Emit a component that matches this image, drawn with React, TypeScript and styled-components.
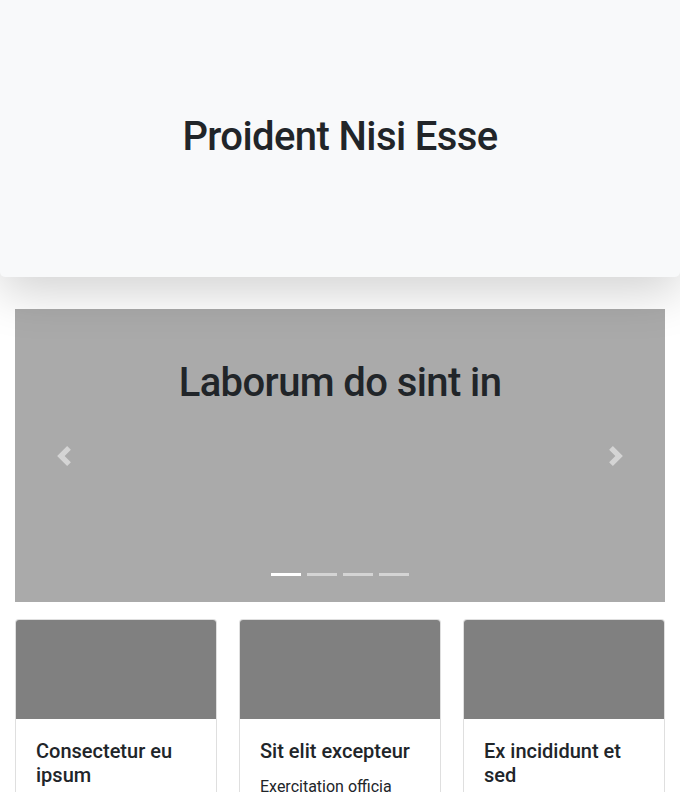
import React from "react";
import styled, { createGlobalStyle } from "styled-components";

const GlobalStyle = createGlobalStyle`
  *, *::before, *::after { box-sizing: border-box; }
  body {
    margin: 0;
    background: #fff;
    font-family: Roboto, "Noto Sans", "Liberation Sans", sans-serif;
    color: #212529;
  }
`;

const Hero = styled.header`
  background: #f8f9fa;
  border-radius: 0 0 5px 5px;
  box-shadow: 0 16px 48px rgba(0, 0, 0, 0.175);
  padding: 113px 16px 116px;
  text-align: center;
  position: relative;
  z-index: 1;
`;

const HeroTitle = styled.h1`
  margin: 0;
  font-size: 40px;
  line-height: 48px;
  font-weight: 500;
  letter-spacing: -0.6px;
  color: #212529;
`;

const Main = styled.main`
  padding: 32px 15px 0;
`;

const Carousel = styled.section`
  position: relative;
  height: 293px;
  background: #aaa;
  padding-top: 50px;
  text-align: center;
`;

const SlideTitle = styled.h2`
  margin: 0;
  font-size: 40px;
  line-height: 48px;
  font-weight: 500;
  letter-spacing: -0.6px;
  color: #212529;
`;

const Control = styled.button<{ $side: "left" | "right" }>`
  position: absolute;
  top: 0;
  bottom: 0;
  ${(p) => (p.$side === "left" ? "left: 0;" : "right: 0;")}
  width: 15%;
  display: flex;
  align-items: center;
  justify-content: center;
  background: none;
  border: 0;
  padding: 0;
  opacity: 0.5;
  cursor: pointer;
`;

const Indicators = styled.ol`
  position: absolute;
  left: 15%;
  right: 15%;
  bottom: 0;
  margin: 0 0 16px;
  padding: 0;
  list-style: none;
  display: flex;
  justify-content: center;
`;

const Indicator = styled.li<{ $active?: boolean }>`
  box-sizing: content-box;
  width: 30px;
  height: 3px;
  margin: 0 3px;
  background: #fff;
  background-clip: padding-box;
  border-top: 10px solid transparent;
  border-bottom: 10px solid transparent;
  opacity: ${(p) => (p.$active ? 1 : 0.5)};
`;

const CardGrid = styled.div`
  display: grid;
  grid-template-columns: repeat(3, 1fr);
  gap: 22px;
  margin-top: 17px;
`;

const Card = styled.article`
  background: #fff;
  border: 1px solid rgba(0, 0, 0, 0.125);
  border-radius: 4px;
  overflow: hidden;
`;

const CardImage = styled.div`
  height: 99px;
  background: #808080;
`;

const CardBody = styled.div`
  padding: 20px;
`;

const CardTitle = styled.h5`
  margin: 0 0 12px;
  font-size: 20px;
  line-height: 24px;
  font-weight: 500;
  color: #212529;
`;

const CardText = styled.p`
  margin: 0;
  font-size: 16px;
  line-height: 24px;
  color: #212529;
`;

const Chevron = ({ dir }: { dir: "prev" | "next" }) => (
  <svg width="20" height="20" viewBox="0 0 8 8" fill="#fff" aria-hidden="true">
    {dir === "prev" ? (
      <path d="M5.25 0l-4 4 4 4 1.5-1.5L4.25 4l2.5-2.5L5.25 0z" />
    ) : (
      <path d="M2.75 0l-1.5 1.5L3.75 4l-2.5 2.5L2.75 8l4-4-4-4z" />
    )}
  </svg>
);

const cards = [
  { title: "Consectetur eu ipsum", text: "Aliqua labore tempor dolore magna." },
  { title: "Sit elit excepteur", text: "Exercitation officia nulla veniam." },
  { title: "Ex incididunt et sed", text: "Duis aute irure dolor in velit." },
];

export default function App() {
  return (
    <>
      <GlobalStyle />
      <Hero>
        <HeroTitle>Proident Nisi Esse</HeroTitle>
      </Hero>
      <Main>
        <Carousel>
          <SlideTitle>Laborum do sint in</SlideTitle>
          <Control $side="left" aria-label="Previous">
            <Chevron dir="prev" />
          </Control>
          <Control $side="right" aria-label="Next">
            <Chevron dir="next" />
          </Control>
          <Indicators>
            <Indicator $active />
            <Indicator />
            <Indicator />
            <Indicator />
          </Indicators>
        </Carousel>
        <CardGrid>
          {cards.map((c) => (
            <Card key={c.title}>
              <CardImage />
              <CardBody>
                <CardTitle>{c.title}</CardTitle>
                <CardText>{c.text}</CardText>
              </CardBody>
            </Card>
          ))}
        </CardGrid>
      </Main>
    </>
  );
}
